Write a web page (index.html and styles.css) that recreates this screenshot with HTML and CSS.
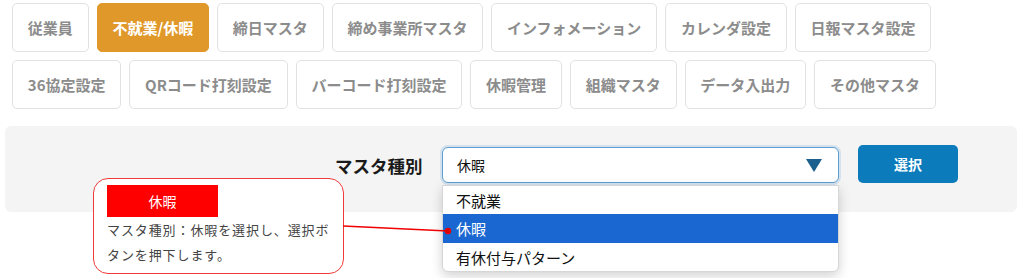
FILE: index.html
```html
<!DOCTYPE html>
<html lang="ja">
<head>
<meta charset="utf-8">
<link rel="stylesheet" href="styles.css">
</head>
<body>
<div class="page">
  <div class="tabs">
    <div class="tab-row">
      <span class="tab">従業員</span>
      <span class="tab active">不就業/休暇</span>
      <span class="tab">締日マスタ</span>
      <span class="tab">締め事業所マスタ</span>
      <span class="tab">インフォメーション</span>
      <span class="tab">カレンダ設定</span>
      <span class="tab">日報マスタ設定</span>
    </div>
    <div class="tab-row">
      <span class="tab">36協定設定</span>
      <span class="tab">QRコード打刻設定</span>
      <span class="tab">バーコード打刻設定</span>
      <span class="tab">休暇管理</span>
      <span class="tab">組織マスタ</span>
      <span class="tab">データ入出力</span>
      <span class="tab">その他マスタ</span>
    </div>
  </div>

  <div class="panel">
    <span class="label">マスタ種別</span>
    <div class="select-wrap">
      <div class="select">
        <span class="select-value">休暇</span>
        <svg class="arrow" width="16" height="13" viewBox="0 0 16 13"><polygon points="0,0 16,0 8,13" fill="#1b5f8f"/></svg>
      </div>
      <ul class="dropdown">
        <li class="opt">不就業</li>
        <li class="opt selected">休暇</li>
        <li class="opt">有休付与パターン</li>
      </ul>
    </div>
    <span class="btn">選択</span>
  </div>

  <div class="callout">
    <div class="callout-title">休暇</div>
    <p class="callout-text">マスタ種別：休暇を選択し、選択ボタンを押下します。</p>
  </div>
  <svg class="connector" width="1024" height="278" viewBox="0 0 1024 278">
    <line x1="343" y1="226" x2="448" y2="231" stroke="#f00000" stroke-width="1.6"/>
    <circle cx="448" cy="231" r="3.2" fill="#e00000"/>
  </svg>
</div>
</body>
</html>
```
FILE: styles.css
```css
* { box-sizing: border-box; }
html, body { margin: 0; padding: 0; background: #ffffff; }
body {
  font-family: "Noto Sans CJK JP", "Noto Sans", sans-serif;
  width: 1024px;
  height: 278px;
  overflow: hidden;
}
.page { position: relative; width: 1024px; height: 278px; }

.tabs { padding: 3px 0 0 12px; display: flex; flex-direction: column; gap: 8px; }
.tab-row { display: flex; gap: 8px; }
.tab {
  display: flex;
  align-items: center;
  justify-content: center;
  height: 49px;
  padding: 0 14.8px;
  border: 1px solid #e2e2e2;
  border-radius: 5px;
  background: #ffffff;
  color: #8c8c8c;
  font-weight: 700;
  font-size: 15px;
  white-space: nowrap;
}
.tab.active { background: #e0982a; border-color: #e0982a; color: #ffffff; }

.panel {
  margin: 17px 0 0 5px;
  width: 1012px;
  height: 86px;
  background: #f4f4f4;
  border-radius: 6px;
  display: flex;
  align-items: flex-start;
  padding: 19px 0 0 330px;
}
.label {
  font-size: 17.5px;
  font-weight: 700;
  color: #1a1a1a;
  width: 88px;
  height: 40px;
  display: flex;
  align-items: center;
  white-space: nowrap;
  margin-right: 19px;
}
.select-wrap { position: relative; margin-top: 2px; }
.select {
  width: 397px;
  height: 36px;
  background: #ffffff;
  border: 1px solid #5d9fd3;
  border-radius: 6px;
  box-shadow: 0 0 0 2px rgba(120, 170, 220, 0.25);
  display: flex;
  align-items: center;
  justify-content: space-between;
  padding: 0 16px 0 14px;
}
.select-value { font-size: 14px; color: #111111; }
.arrow { display: block; }

.dropdown {
  position: absolute;
  left: 0;
  top: 38px;
  width: 397px;
  margin: 0;
  padding: 0;
  list-style: none;
  background: #ffffff;
  border: 1px solid #d6d6d6;
  border-radius: 0 0 6px 6px;
  box-shadow: 0 4px 12px rgba(0, 0, 0, 0.18);
  overflow: hidden;
}
.opt {
  height: 28px;
  display: flex;
  align-items: center;
  padding-left: 13px;
  font-size: 15px;
  color: #111111;
}
.opt.selected { background: #1b67d2; color: #ffffff; height: 29px; }

.btn {
  margin-left: 19px;
  width: 100px;
  height: 38px;
  background: #0b7bbb;
  border-radius: 5px;
  color: #ffffff;
  font-weight: 700;
  font-size: 14px;
  display: flex;
  align-items: center;
  justify-content: center;
}

.callout {
  position: absolute;
  left: 93px;
  top: 178px;
  width: 251px;
  height: 96px;
  background: #ffffff;
  border: 1.5px solid #f03a3a;
  border-radius: 15px;
  padding: 6px 0 0 13px;
}
.callout-title {
  width: 111px;
  height: 32px;
  background: #ff0000;
  color: #ffffff;
  font-size: 14px;
  display: flex;
  align-items: center;
  justify-content: center;
}
.callout-text {
  margin: 0;
  width: 230px;
  font-size: 13px;
  line-height: 25px;
  letter-spacing: 0.9px;
  color: #444444;
}
.connector { position: absolute; left: 0; top: 0; pointer-events: none; }
```
